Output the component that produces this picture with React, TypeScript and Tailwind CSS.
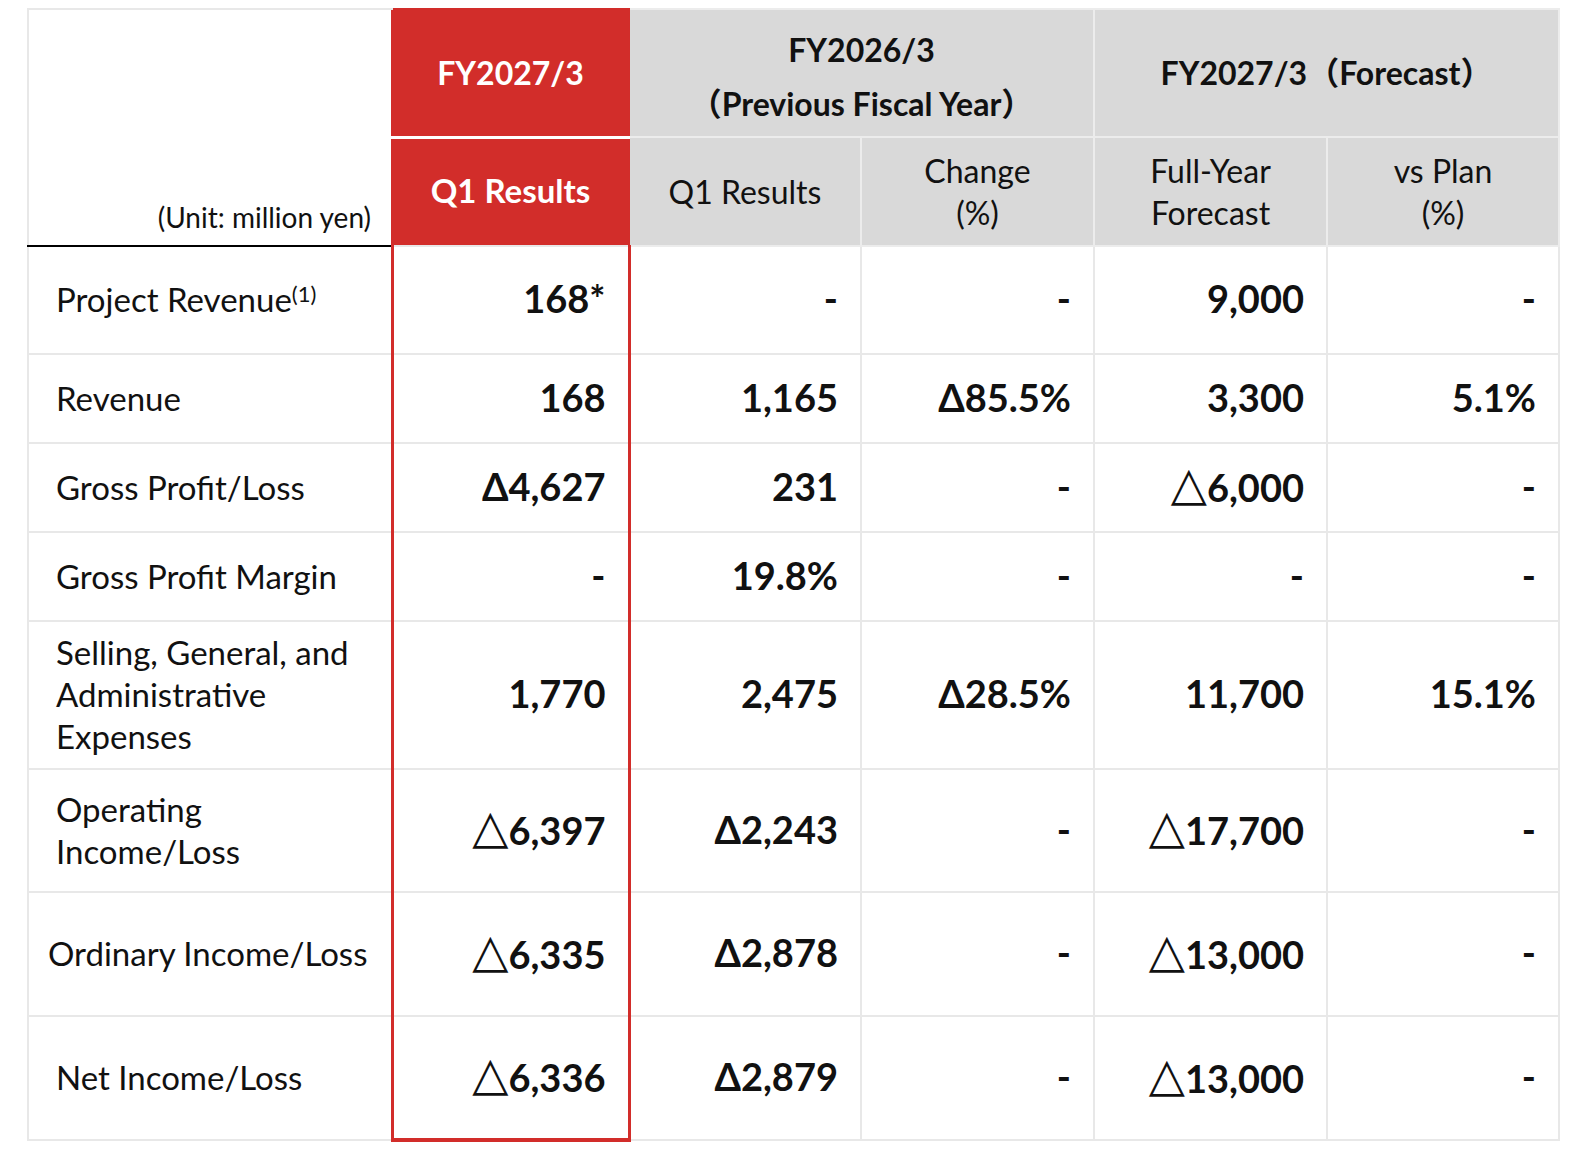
import type { ReactNode } from 'react'

type Row = {
  label: ReactNode
  labelClass?: string
  height: string
  values: string[]
}

const rows: Row[] = [
  {
    label: (
      <>
        Project Revenue<sup className="relative -top-[10px] text-[22px]">(1)</sup>
      </>
    ),
    height: 'h-[108px]',
    values: ['168*', '-', '-', '9,000', '-'],
  },
  { label: 'Revenue', height: 'h-[89px]', values: ['168', '1,165', 'Δ85.5%', '3,300', '5.1%'] },
  { label: 'Gross Profit/Loss', height: 'h-[89px]', values: ['Δ4,627', '231', '-', '△6,000', '-'] },
  { label: 'Gross Profit Margin', height: 'h-[89px]', values: ['-', '19.8%', '-', '-', '-'] },
  {
    label: (
      <>
        Selling, General, and
        <br />
        Administrative
        <br />
        Expenses
      </>
    ),
    height: 'h-[148px]',
    values: ['1,770', '2,475', 'Δ28.5%', '11,700', '15.1%'],
  },
  {
    label: (
      <>
        Operating
        <br />
        Income/Loss
      </>
    ),
    height: 'h-[123px]',
    values: ['△6,397', 'Δ2,243', '-', '△17,700', '-'],
  },
  {
    label: 'Ordinary Income/Loss',
    labelClass: 'pl-[19px]',
    height: 'h-[124px]',
    values: ['△6,335', 'Δ2,878', '-', '△13,000', '-'],
  },
  { label: 'Net Income/Loss', height: 'h-[124px]', values: ['△6,336', 'Δ2,879', '-', '△13,000', '-'] },
]

// outline triangle (△) is a thin glyph in the source deck, bold delta stays bold
function Value({ v }: { v: string }) {
  if (v.startsWith('△')) {
    return (
      <>
        <span className="relative -top-[2px] font-['DejaVu_Sans'] text-[47px] font-normal leading-none">△</span>
        {v.slice(1)}
      </>
    )
  }
  return <>{v}</>
}

export default function App() {
  return (
    <div className="min-h-screen bg-white pl-[27px] pt-[8px] font-[Lato,'Noto_Sans_CJK_JP',sans-serif] text-[#111]">
      <table className="w-[1531px] table-fixed border-collapse">
        <colgroup>
          <col className="w-[364px]" />
          <col className="w-[237px]" />
          <col className="w-[232px]" />
          <col className="w-[233px]" />
          <col className="w-[233px]" />
          <col className="w-[232px]" />
        </colgroup>
        <thead>
          {/* Header: fiscal year groups */}
          <tr className="h-[128px]">
            <th
              rowSpan={2}
              className="border-2 border-[#e8e8e8] border-r-0 border-b-2 border-b-black pr-[20px] pb-[7px] text-right align-bottom text-[28px] font-normal"
            >
              (Unit: million yen)
            </th>
            <th className="border-2 border-[#d22d2a] border-b-[3px] border-b-white bg-[#d22d2a] text-[32px] font-bold text-white">
              FY2027/3
            </th>
            <th
              colSpan={2}
              className="border-2 border-[#ececec] bg-[#d9d9d9] pt-[8px] text-[32px] font-bold leading-[54px]"
            >
              FY2026/3
              <br />
              （Previous Fiscal Year）
            </th>
            <th colSpan={2} className="border-2 border-[#ececec] bg-[#d9d9d9] text-[32px] font-bold">
              FY2027/3（Forecast）
            </th>
          </tr>
          <tr className="h-[109px]">
            <th className="border-x-2 border-[#d22d2a] bg-[#d22d2a] pb-[2px] text-[33px] font-bold text-white">
              Q1 Results
            </th>
            <th className="border-2 border-[#ececec] bg-[#d9d9d9] text-[32px] font-normal">Q1 Results</th>
            <th className="border-2 border-[#ececec] bg-[#d9d9d9] text-[32px] leading-[42px] font-normal">
              Change
              <br />
              (%)
            </th>
            <th className="border-2 border-[#ececec] bg-[#d9d9d9] text-[32px] leading-[42px] font-normal">
              Full-Year
              <br />
              Forecast
            </th>
            <th className="border-2 border-[#ececec] bg-[#d9d9d9] text-[32px] leading-[42px] font-normal">
              vs Plan
              <br />
              (%)
            </th>
          </tr>
        </thead>
        <tbody>
          {rows.map((row, i) => {
            const last = i === rows.length - 1
            return (
              <tr key={i} className={row.height}>
                <td
                  className={`border-2 border-[#e8e8e8] pb-[2px] text-[33px] leading-[42px] ${
                    row.labelClass ?? 'pl-[27px]'
                  }`}
                >
                  {row.label}
                </td>
                {row.values.map((v, j) => (
                  <td
                    key={j}
                    className={`pr-[22px] pb-[4px] text-right text-[38px] leading-[44px] font-bold ${
                      j === 0
                        ? `border-x-[3px] border-x-[#d22d2a] border-t-2 border-t-[#e8e8e8] ${
                            last ? 'border-b-4 border-b-[#d22d2a]' : 'border-b-2 border-b-[#e8e8e8]'
                          }`
                        : 'border-2 border-[#e8e8e8]'
                    }`}
                  >
                    <Value v={v} />
                  </td>
                ))}
              </tr>
            )
          })}
        </tbody>
      </table>
    </div>
  )
}
